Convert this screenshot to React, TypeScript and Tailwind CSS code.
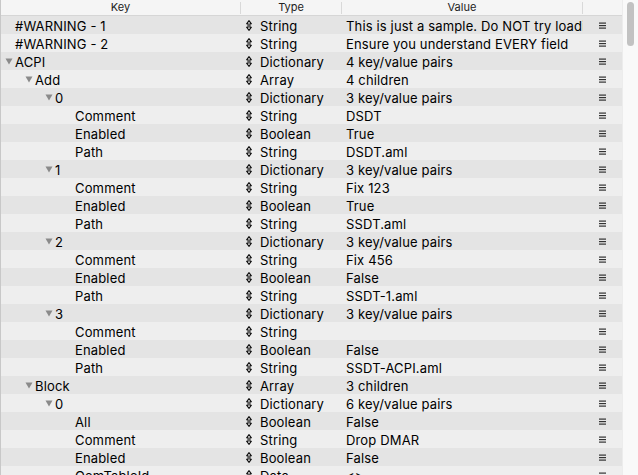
import React from "react";

type Row = { k: string; lvl: number; open?: boolean; t: string; v: string };

const rows: Row[] = [
  { k: "#WARNING - 1", lvl: 0, t: "String", v: "This is just a sample. Do NOT try loading it." },
  { k: "#WARNING - 2", lvl: 0, t: "String", v: "Ensure you understand EVERY field" },
  { k: "ACPI", lvl: 0, open: true, t: "Dictionary", v: "4 key/value pairs" },
  { k: "Add", lvl: 1, open: true, t: "Array", v: "4 children" },
  { k: "0", lvl: 2, open: true, t: "Dictionary", v: "3 key/value pairs" },
  { k: "Comment", lvl: 3, t: "String", v: "DSDT" },
  { k: "Enabled", lvl: 3, t: "Boolean", v: "True" },
  { k: "Path", lvl: 3, t: "String", v: "DSDT.aml" },
  { k: "1", lvl: 2, open: true, t: "Dictionary", v: "3 key/value pairs" },
  { k: "Comment", lvl: 3, t: "String", v: "Fix 123" },
  { k: "Enabled", lvl: 3, t: "Boolean", v: "True" },
  { k: "Path", lvl: 3, t: "String", v: "SSDT.aml" },
  { k: "2", lvl: 2, open: true, t: "Dictionary", v: "3 key/value pairs" },
  { k: "Comment", lvl: 3, t: "String", v: "Fix 456" },
  { k: "Enabled", lvl: 3, t: "Boolean", v: "False" },
  { k: "Path", lvl: 3, t: "String", v: "SSDT-1.aml" },
  { k: "3", lvl: 2, open: true, t: "Dictionary", v: "3 key/value pairs" },
  { k: "Comment", lvl: 3, t: "String", v: "" },
  { k: "Enabled", lvl: 3, t: "Boolean", v: "False" },
  { k: "Path", lvl: 3, t: "String", v: "SSDT-ACPI.aml" },
  { k: "Block", lvl: 1, open: true, t: "Array", v: "3 children" },
  { k: "0", lvl: 2, open: true, t: "Dictionary", v: "6 key/value pairs" },
  { k: "All", lvl: 3, t: "Boolean", v: "False" },
  { k: "Comment", lvl: 3, t: "String", v: "Drop DMAR" },
  { k: "Enabled", lvl: 3, t: "Boolean", v: "False" },
  { k: "OemTableId", lvl: 3, t: "Data", v: "<>" },
];

const indentClass = ["pl-[4px]", "pl-[24px]", "pl-[44px]", "pl-[64px]"];

function Tri() {
  return (
    <svg width="8" height="7" viewBox="0 0 8 7" className="shrink-0 mr-[2px] -mt-[1px]">
      <path d="M0.5 0.5 L7.5 0.5 L4 6.5 Z" fill="#8a8a8a" />
    </svg>
  );
}

function Updown() {
  return (
    <svg width="6" height="11" viewBox="0 0 6 11" className="shrink-0 -mt-[1px]">
      <path
        d="M3 0.7 L5.4 3.8 L3.9 3.8 L3.9 7.2 L5.4 7.2 L3 10.3 L0.6 7.2 L2.1 7.2 L2.1 3.8 L0.6 3.8 Z"
        fill="none"
        stroke="#111"
        strokeWidth="1.1"
        strokeLinejoin="round"
      />
    </svg>
  );
}

function Burger() {
  return (
    <svg width="7" height="7" viewBox="0 0 7 7" className="-mt-[1px]">
      <rect x="0" y="0.5" width="7" height="1.2" fill="#333" />
      <rect x="0" y="3" width="7" height="1.2" fill="#333" />
      <rect x="0" y="5.5" width="7" height="1.2" fill="#333" />
    </svg>
  );
}

export default function App() {
  return (
    <div
      className="w-[638px] h-[475px] overflow-hidden flex bg-[#fafafa] text-black"
      style={{ fontFamily: "Inter, 'Liberation Sans', Arial, sans-serif" }}
    >
      <div className="w-[622px] flex flex-col border-l border-[#c8c8c8]">
        <div className="h-[16px] shrink-0 grid grid-cols-[240px_101px_241px_39px] bg-[#f5f5f5] border-b border-[#d6d6d6] text-[11px] text-[#222] items-center">
          <div className="flex items-center justify-center border-r border-[#d9d9d9] h-[12px]">Key</div>
          <div className="flex items-center justify-center border-r border-[#d9d9d9] h-[12px]">Type</div>
          <div className="flex items-center justify-center border-r border-[#d9d9d9] h-[12px]">Value</div>
          <div />
        </div>
        {rows.map((r, i) => (
          <div
            key={i}
            className={`h-[18px] shrink-0 grid grid-cols-[240px_101px_241px_39px] items-center pt-[2px] text-[13px] leading-[16px] tracking-[0.15px] ${
              i % 2 === 0 ? "bg-[#e4e4e4]" : "bg-[#eeeeee]"
            }`}
          >
            <div className={`flex items-center whitespace-nowrap overflow-hidden ${indentClass[r.lvl]}`}>
              {r.open ? <Tri /> : <span className="w-[10px] shrink-0" />}
              <span>{r.k}</span>
            </div>
            <div className="flex items-center gap-[8px] pl-[5px] whitespace-nowrap overflow-hidden">
              <Updown />
              <span>{r.t}</span>
            </div>
            <div className="pl-[4px] pr-[2px] whitespace-nowrap overflow-hidden">{r.v}</div>
            <div className="flex items-center pl-[16px]">
              <Burger />
            </div>
          </div>
        ))}
      </div>
      <div className="w-[16px] shrink-0 bg-[#f9f9f9] border-l border-[#ececec] pt-[2px] flex justify-center">
        <div className="w-[7px] h-[44px] rounded-full bg-[#c2c2c2]" />
      </div>
    </div>
  );
}
